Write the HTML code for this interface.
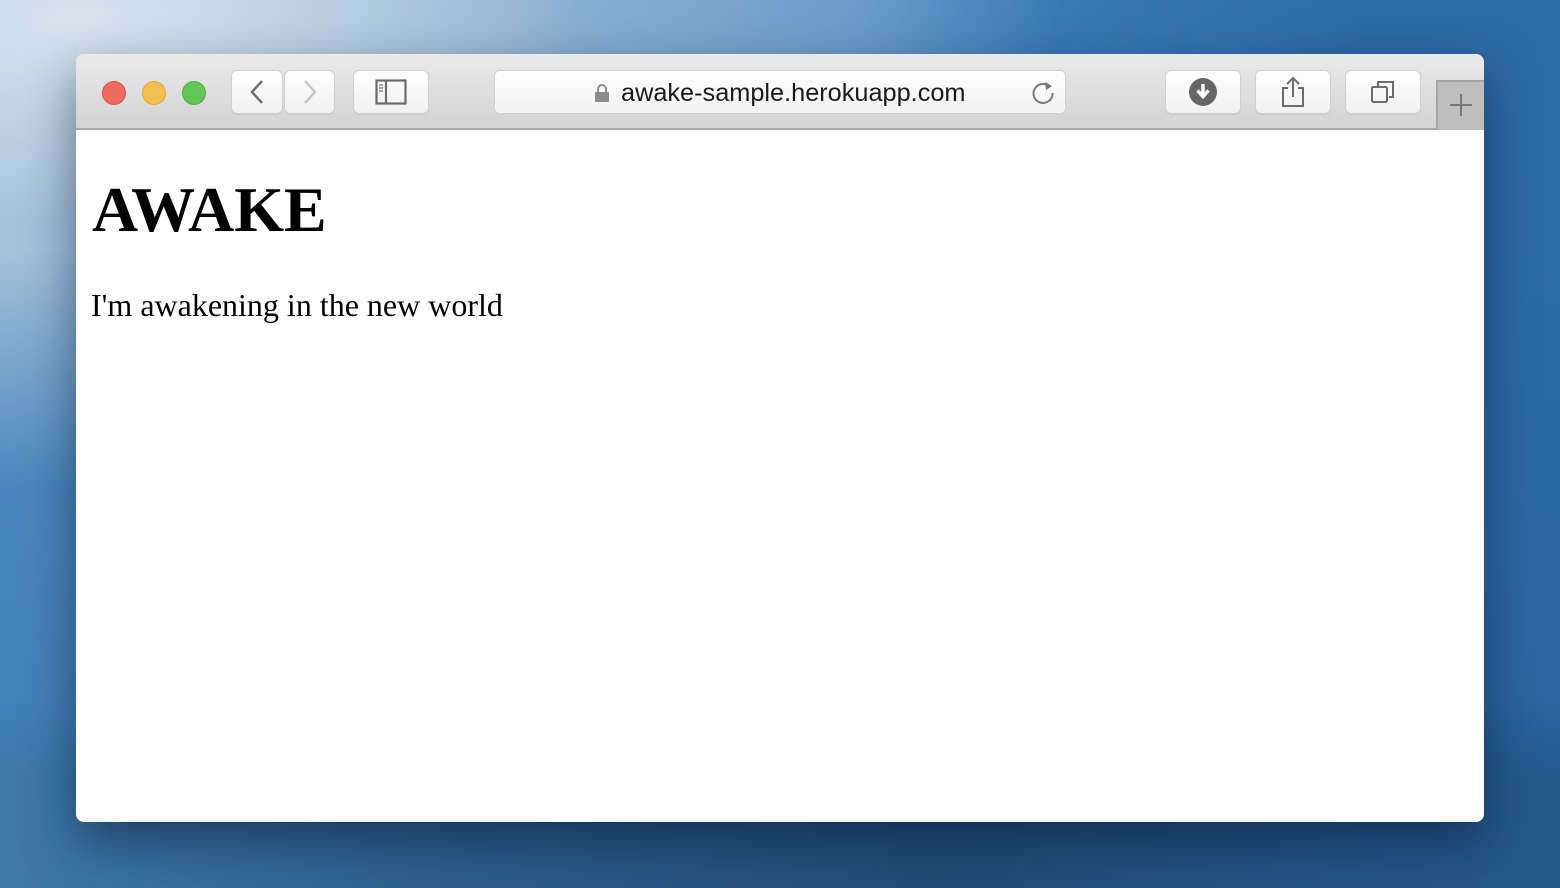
<!DOCTYPE html>
<html><head><meta charset="utf-8"><style>
html,body{margin:0;padding:0;width:1560px;height:888px;overflow:hidden}
body{background:
radial-gradient(ellipse 500px 200px at 80px 20px,#d8e4ee 0%,rgba(200,216,230,0) 100%),
linear-gradient(100deg,#a9c4da 0%,#8fb2d1 30%,#6b9cc9 50%,#3a78b5 62%,#2d6aa6 80%,#2e6aa8 100%);position:relative;font-family:"Liberation Sans",sans-serif}
.bottom{position:absolute;left:0;right:0;top:700px;bottom:0;background:linear-gradient(90deg,#3f79a8 0%,#2c5e8a 30%,#234d76 60%,#25598c 100%);-webkit-mask-image:linear-gradient(rgba(0,0,0,0),#000 40%);mask-image:linear-gradient(rgba(0,0,0,0),#000 40%)}
.left{position:absolute;left:0;top:250px;width:80px;height:600px;background:linear-gradient(180deg,rgba(90,140,190,0) 0%,#4a86bd 40%,#3f7db6 100%)}
.right{position:absolute;right:0;top:250px;width:80px;height:600px;background:linear-gradient(180deg,#2d6aa8 0%,#2b64a0 100%)}
.win{position:absolute;left:76px;top:54px;width:1408px;height:768px;border-radius:8px;overflow:hidden;background:#fff;box-shadow:0 20px 50px rgba(0,20,50,.5)}
.bar{position:absolute;left:0;top:0;width:1408px;height:74px;background:linear-gradient(#ebeaeb,#d4d3d4);border-bottom:2px solid #a9a8a9}
.dot{position:absolute;top:27px;width:24px;height:24px;border-radius:50%}
.btn{position:absolute;top:16px;height:44px;background:linear-gradient(#fdfdfd,#f1f1f1);border:1px solid #cfcfcf;border-radius:6px;box-sizing:border-box;box-shadow:0 1px 0 rgba(0,0,0,.05)}
.btn svg{position:absolute;left:50%;top:50%;transform:translate(-50%,-50%)}
.url{position:absolute;left:418px;top:16px;width:572px;height:44px;background:linear-gradient(#fdfdfd,#f2f2f2);border:1px solid #cfcfcf;border-radius:6px;box-sizing:border-box}
.plus{position:absolute;left:1360px;top:26px;width:48px;height:50px;background:#bfbebf;border-left:2px solid #a6a5a6;border-top:2px solid #a6a5a6;box-sizing:border-box}
h1{position:absolute;left:16px;top:119px;margin:0;font:bold 64px "Liberation Serif",serif}
p{position:absolute;left:15px;top:233px;margin:0;font:32px "Liberation Serif",serif}
</style></head><body>
<div class="left"></div><div class="right"></div><div class="bottom"></div>
<div class="win">
<div class="bar">
<div class="dot" style="left:26px;background:#ee6a5f;border:1px solid #d8554b;box-sizing:border-box"></div>
<div class="dot" style="left:66px;background:#f6be4f;border:1px solid #dea53c;box-sizing:border-box"></div>
<div class="dot" style="left:106px;background:#62c655;border:1px solid #4faf43;box-sizing:border-box"></div>
<div class="btn" style="left:155px;width:52px"><svg width="16" height="26" viewBox="0 0 16 26"><path d="M13 2 L3 13 L13 24" fill="none" stroke="#6b6b6b" stroke-width="2.4"/></svg></div>
<div class="btn" style="left:208px;width:51px"><svg width="16" height="26" viewBox="0 0 16 26"><path d="M3 2 L13 13 L3 24" fill="none" stroke="#c3c3c3" stroke-width="2.4"/></svg></div>
<div class="btn" style="left:277px;width:76px"><svg width="32" height="26" viewBox="0 0 32 26"><rect x="1.5" y="1.5" width="29" height="23" fill="none" stroke="#6b6b6b" stroke-width="2.2"/><line x1="11" y1="1" x2="11" y2="25" stroke="#6b6b6b" stroke-width="2.2"/><path d="M4 6h4M4 9h4M4 12h4" stroke="#8a8a8a" stroke-width="1.4"/></svg></div>
<div class="url">
<svg style="position:absolute;left:99px;top:12px" width="16" height="20" viewBox="0 0 16 20"><path d="M4 9V6a4 4 0 0 1 8 0v3" fill="none" stroke="#8c8c8c" stroke-width="2"/><rect x="1" y="9" width="14" height="10" rx="1" fill="#8c8c8c"/></svg>
<div style="position:absolute;left:126px;top:8px;font-size:25.3px;color:#1a1a1a">awake-sample.herokuapp.com</div>
<svg style="position:absolute;left:535px;top:8px" width="26" height="26" viewBox="0 0 26 26"><path d="M20 8 A9.5 9.5 0 1 0 22.5 14" fill="none" stroke="#777" stroke-width="2"/><path d="M15 3 L22 7 L16 11 Z" fill="#777"/></svg>
</div>
<div class="btn" style="left:1089px;width:76px"><svg width="30" height="30" viewBox="0 0 30 30"><circle cx="15" cy="15" r="14" fill="#666"/><path d="M15 7v12M9.5 13.5 L15 19.5 L20.5 13.5" fill="none" stroke="#fff" stroke-width="3.5"/></svg></div>
<div class="btn" style="left:1179px;width:76px"><svg width="26" height="32" viewBox="0 0 26 32"><path d="M8 12H3v18h20V12h-5" fill="none" stroke="#6b6b6b" stroke-width="2"/><path d="M13 21V2M7 8 L13 2 L19 8" fill="none" stroke="#6b6b6b" stroke-width="2"/></svg></div>
<div class="btn" style="left:1269px;width:76px"><svg width="26" height="26" viewBox="0 0 26 26"><rect x="2" y="8" width="15" height="15" rx="1.5" fill="none" stroke="#6b6b6b" stroke-width="2"/><path d="M8 7V3h15v15h-4" fill="none" stroke="#6b6b6b" stroke-width="2"/></svg></div>
<div class="plus"><svg style="position:absolute;left:12px;top:12px" width="22" height="22" viewBox="0 0 22 22"><path d="M11 0v22M0 11h22" stroke="#777" stroke-width="2"/></svg></div>
</div>
<h1>AWAKE</h1>
<p>I'm awakening in the new world</p>
</div>
</body></html>
